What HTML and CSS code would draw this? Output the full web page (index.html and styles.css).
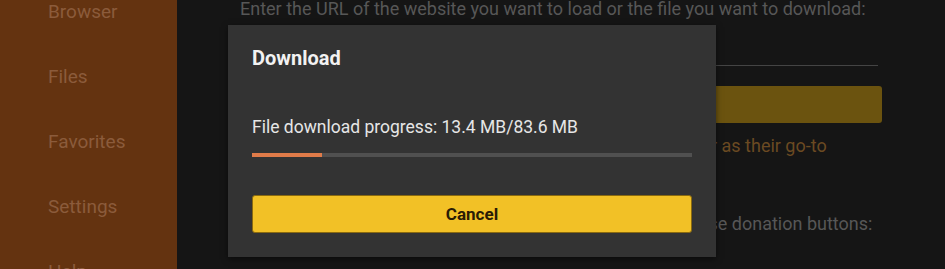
FILE: index.html
```html
<!DOCTYPE html>
<html lang="en">
<head>
    <meta charset="UTF-8">
    <meta name="viewport" content="width=device-width, initial-scale=1.0">
    <title>Downloader</title>
    <link rel="stylesheet" href="styles.css">
</head>
<body>
    <div class="app">
        <nav class="sidebar">
            <ul class="nav-list">
                <li>Browser</li>
                <li>Files</li>
                <li>Favorites</li>
                <li>Settings</li>
                <li>Help</li>
            </ul>
        </nav>

        <main class="main">
            <p class="hint">Enter the URL of the website you want to load or the file you want to download:</p>
            <div class="url-input"></div>
            <div class="go-button"></div>
            <p class="note">Millions of users around the world now use this Downloader as their go-to</p>
            <p class="hint donate">If you want to support this app and its developers, please use donation buttons:</p>
        </main>

        <div class="dialog">
            <h2 class="dialog-title">Download</h2>
            <p class="dialog-text">File download progress: 13.4 MB/83.6 MB</p>
            <div class="progress">
                <div class="progress-fill" style="width: 16%"></div>
            </div>
            <button class="cancel-btn">Cancel</button>
        </div>
    </div>
</body>
</html>
```

FILE: styles.css
```css
html, body {
    margin: 0;
    padding: 0;
    height: 100%;
    overflow: hidden;
}
body {
    font-family: Roboto, "Liberation Sans", Arial, sans-serif;
    background-color: #151515;
}
.app {
    display: flex;
    height: 269px;
    position: relative;
}
.sidebar {
    width: 177px;
    flex-shrink: 0;
    background-color: #643310;
    overflow: hidden;
}
.nav-list {
    list-style: none;
    margin: -21px 0 0 0;
    padding: 0 0 0 48px;
}
.nav-list li {
    font-size: 19px;
    line-height: 65px;
    color: #8b5b3b;
}
.main {
    flex: 1;
    padding-left: 63px;
    overflow: hidden;
}
.hint {
    margin: 0;
    font-size: 18px;
    line-height: 18px;
    color: #575757;
    white-space: nowrap;
}
.url-input {
    width: 638px;
    height: 29px;
    border-bottom: 1px solid #444;
    margin-top: 18px;
}
.go-button {
    width: 642px;
    height: 37px;
    margin-top: 20px;
    background-color: #6b530f;
    border-radius: 3px;
}
.note {
    margin: 12px 0 0 0;
    font-size: 18px;
    line-height: 21px;
    color: #6b4a22;
    white-space: nowrap;
}
.donate {
    margin-top: 59px;
}
.dialog {
    position: absolute;
    left: 228px;
    top: 25px;
    width: 440px;
    height: 188px;
    padding: 21px 24px 23px 24px;
    background-color: #333333;
    box-shadow: 0 2px 6px rgba(0, 0, 0, 0.5);
}
.dialog-title {
    margin: 0;
    font-size: 20px;
    line-height: 24px;
    font-weight: bold;
    color: #f2f2f2;
}
.dialog-text {
    margin: 47px 0 0 0;
    font-size: 17.5px;
    line-height: 20px;
    color: #e6e6e6;
}
.progress {
    margin-top: 16px;
    height: 4px;
    background-color: #505050;
}
.progress-fill {
    height: 100%;
    background-color: #e07b49;
}
.cancel-btn {
    display: block;
    width: 100%;
    height: 38px;
    margin-top: 38px;
    border: 1px solid #8a6a10;
    border-radius: 3px;
    background-color: #f2c126;
    font-family: Roboto, "Liberation Sans", Arial, sans-serif;
    font-size: 17px;
    font-weight: bold;
    color: #2a1c05;
}
```
